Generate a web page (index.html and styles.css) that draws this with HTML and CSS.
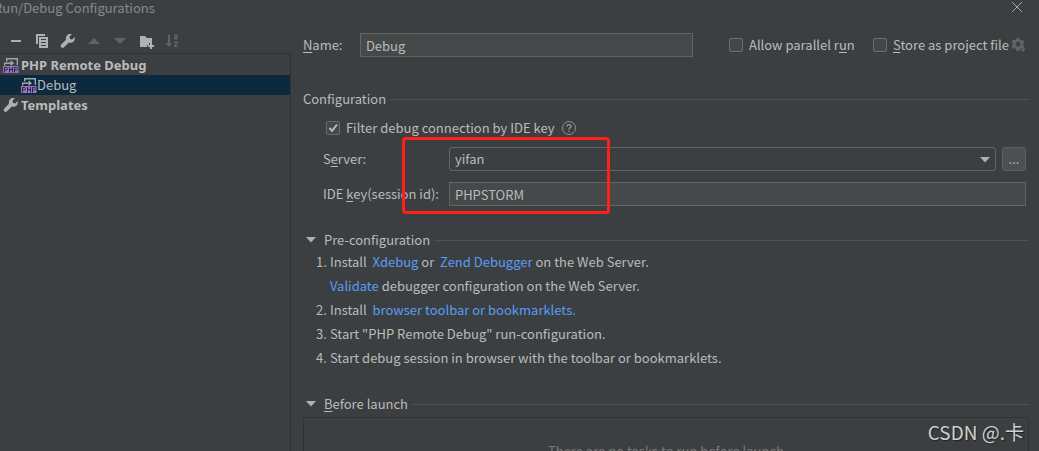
FILE: index.html
```html
<!DOCTYPE html>
<html lang="en">
<head>
<meta charset="utf-8">
<title>Run/Debug Configurations</title>
<link rel="stylesheet" href="styles.css">
</head>
<body>
<svg class="defs" aria-hidden="true">
  <defs>
    <symbol id="wrench" viewBox="0 0 16 16"><path fill="#afb1b3" d="M14.6 4.1 12.3 6.4 9.9 5.9 9.6 3.6 11.9 1.3C10.2.7 8.3 1.1 7 2.4 5.8 3.600 5.500 5.300 6 6.800L1.300 11.500a1.900 1.900 0 0 0 0 2.700 1.900 1.900 0 0 0 2.700 0L8.900 9.500c1.600.6 3.400.2 4.600-1 1.200-1.200 1.600-2.900 1.100-4.400Z"/></symbol>
    <symbol id="php" viewBox="0 0 16 16">
      <path fill="none" stroke="#9aa7b0" stroke-width="1.400" d="M3.700 4.500V1.700H14.300V8M1 6.300H9.500M7.500 3.900 10 6.300 7.500 8.200M1.700 8.500V6"/>
      <path fill="#9876c4" d="M0 9h15.500v7H0z"/>
      <path fill="none" stroke="#2f2540" d="M1.500 15.500v-5h2q1 0 1 1.200t-1 1.300h-2M6.500 10v5.500M9.500 10v5.500M6.500 12.500h3M11.500 15.500v-5h2q1 0 1 1.200t-1 1.300h-2"/>
    </symbol>
    <symbol id="down" viewBox="0 0 10 6"><path fill="#afb1b3" d="M0 0h10L5 5.500z"/></symbol>
  </defs>
</svg>
<header class="titlebar">
  <h1 class="title">Run/Debug Configurations</h1>
  <button class="plain close" aria-label="Close"><svg width="12" height="12"><path fill="none" stroke="#a4a6a8" d="m1 1 10 10M11 1 1 11"/></svg></button>
</header>
<div class="window">
  <aside class="sidebar">
    <div class="toolbar">
      <button class="plain" aria-label="Remove"><svg width="16" height="16"><path fill="#afb1b3" d="M3 7h10v2H3z"/></svg></button>
      <button class="plain" aria-label="Copy"><svg width="16" height="16"><path fill="#afb1b3" fill-rule="evenodd" d="M2 1h9v2H4v8H2zM5 4h9v11H5zM7 6v1h5V6zm0 3v1h5V9zm0 3v1h5v-1z"/></svg></button>
      <button class="plain" aria-label="Edit templates"><svg width="16" height="16"><use href="#wrench"/></svg></button>
      <button class="plain" aria-label="Move up"><svg width="16" height="16"><path fill="#606365" d="M2 11h12L8 5z"/></svg></button>
      <button class="plain" aria-label="Move down"><svg width="16" height="16"><path fill="#606365" d="M2 5h12L8 11z"/></svg></button>
      <button class="plain" aria-label="New folder"><svg width="16" height="16"><path fill="#afb1b3" d="M2 3h5l2 2h5v5h-3v2H9v2H2zM12 10h2v2h2v2h-2v2h-2v-2h-2v-2h2z"/></svg></button>
      <button class="plain" aria-label="Sort"><svg width="16" height="16"><path fill="#606365" d="M4 2h2v8h2.500L5 14 1.500 10H4z"/><path fill="none" stroke="#606365" stroke-width="1.400" d="M10 2.200h2.800V6.500M13 4.200H10.700v1.700H13M10 9.200h3.400L10.500 13.300H14"/></svg></button>
    </div>
    <ul class="tree">
      <li class="node group"><svg width="16" height="16"><use href="#php"/></svg>PHP Remote Debug</li>
      <li class="node child selected"><svg width="16" height="16"><use href="#php"/></svg>Debug</li>
      <li class="node group"><svg width="16" height="16"><use href="#wrench"/></svg>Templates</li>
    </ul>
  </aside>
  <main class="panel">
    <div class="name-row">
      <label class="name-label" for="name"><u>N</u>ame:</label>
      <input class="field name" id="name" type="text" value="Debug">
      <label class="option parallel"><input class="check" type="checkbox"><span>Allow parallel r<u>u</u>n</span></label>
      <label class="option store"><input class="check" type="checkbox"><span><u>S</u>tore as project file</span></label>
      <button class="plain gear" aria-label="Storage options"><svg width="16" height="16"><path fill="#606365" fill-rule="evenodd" d="M5.500 1h3l.4 1.800 1.300.8 1.800-.6 1.500 2.600-1.400 1.300v1.400l1.400 1.300-1.300 1.900-1.900-.4-1.400.9-.4 2h-3l-.4-2-1.300-.8-1.800.6-1.500-2.600 1.400-1.300V6.400L.5 5.100 2 2.500l1.800.6 1.300-.8zM7 4.800a2.400 2.400 0 1 0 0 4.800 2.400 2.400 0 0 0 0-4.800ZM9 11.500h6L12 15z"/></svg></button>
    </div>
    <fieldset class="group-box">
      <legend class="heading">Configuration</legend>
      <div class="filter-row">
        <label class="option"><input class="check" type="checkbox" checked>Filter debug connection by IDE key</label>
        <button class="plain" aria-label="Help"><svg width="16" height="16"><circle cx="8" cy="8" r="6.500" fill="none" stroke="#8f9193"/><path fill="none" stroke="#9b9d9f" stroke-width="1.300" d="M6 6.500C6 4 10 4 10 6.400 10 7.800 8 7.800 8 9.500M8 10.700V12"/></svg></button>
      </div>
      <div class="form">
        <label for="server">S<u>e</u>rver:</label>
        <div class="server-row">
          <div class="select-wrap">
            <select class="field select" id="server"><option>yifan</option></select>
            <svg class="arrow" width="10" height="6"><use href="#down"/></svg>
          </div>
          <button class="more" aria-label="Browse servers">...</button>
        </div>
        <label for="key">IDE <u>k</u>ey(session id):</label>
        <input class="field" id="key" type="text" value="PHPSTORM">
        <div class="highlight"></div>
      </div>
    </fieldset>
    <section class="pre">
      <h2 class="heading"><svg width="10" height="6"><use href="#down"/></svg>Pre-configuration</h2>
      <ol class="steps">
        <li>Install&nbsp; <a href="#">Xdebug</a> or&nbsp; <a href="#">Zend Debugger</a> on the Web Server.<br><a href="#">Validate</a> debugger configuration on the Web Server.</li>
        <li>Install&nbsp; <a href="#">browser toolbar or bookmarklets.</a></li>
        <li>Start "PHP Remote Debug" run-configuration.</li>
        <li>Start debug session in browser with the toolbar or bookmarklets.</li>
      </ol>
    </section>
    <section class="before">
      <h2 class="heading"><svg width="10" height="6"><use href="#down"/></svg><span><u>B</u>efore launch</span></h2>
      <div class="tasks">There are no tasks to run before launch</div>
    </section>
  </main>
</div>
<div class="watermark">CSDN @.卡</div>
</body>
</html>
```
FILE: styles.css
```css
* { box-sizing: border-box; }
body {
  margin: 0;
  height: 100vh;
  overflow: hidden;
  display: flex;
  flex-direction: column;
  background: #3c3f41;
  color: #bbbbbb;
  font: 13px/20px "Noto Sans CJK SC", "Noto Sans", sans-serif;
}
button, input, select { font: inherit; color: inherit; }
svg { flex: none; display: block; }
u { text-underline-offset: 2px; }
.defs { position: absolute; width: 0; height: 0; }
.plain { display: block; padding: 0; border: 0; background: none; }

.titlebar {
  flex: none;
  height: 28px;
  display: flex;
  justify-content: space-between;
  align-items: flex-start;
  padding: 0 16px 0 0;
}
.title { margin: -2px 0 0 -6px; font-size: 13px; font-weight: 400; color: #87898a; }
.close { margin-top: 1px; }

.window { flex: 1; min-height: 0; display: flex; }
.sidebar { flex: 0 0 28%; display: flex; flex-direction: column; }
.toolbar { display: flex; align-items: flex-start; gap: 10px; height: 26px; padding: 5px 8px 0; border-bottom: 1px solid #323232; }
.tree { flex: 1; margin: 0; padding: 1px 0 0; list-style: none; border-right: 1px solid #323232; }
.node { display: flex; align-items: center; gap: 2px; height: 20px; padding-left: 3px; }
.group { font-family: "Noto Sans", sans-serif; line-height: 18px; font-weight: 700; }
.child { padding-left: 21px; gap: 0; }
.selected { background: #0d293e; }

.panel { flex: 1; min-width: 0; padding: 5px 10px 0 12px; display: flex; flex-direction: column; }
.name-row { display: flex; align-items: center; height: 24px; }
.name-label { width: 57px; }
.field {
  width: 100%;
  height: 24px;
  padding: 0 5px;
  border: 1px solid #646464;
  border-radius: 0;
  background: #45494a;
  outline: 0;
}
.name { flex: 1; width: auto; min-width: 0; }
.option { display: flex; align-items: center; gap: 6px; white-space: nowrap; }
.parallel { width: 144px; margin-left: 36px; }
.store { width: 138px; }
.gear { margin-right: 2px; }
.check {
  appearance: none;
  flex: none;
  width: 14px;
  height: 14px;
  margin: 0;
  border: 1px solid #6b6b6b;
  border-radius: 2px;
  background: #43494a;
}
.check:checked {
  background: #43494a url("data:image/svg+xml,%3Csvg xmlns='http://www.w3.org/2000/svg' viewBox='0 0 12 12'%3E%3Cpath d='M2.500 6 5 9 10 2.500' fill='none' stroke='%23bbb' stroke-width='2'/%3E%3C/svg%3E");
}

.heading { display: flex; align-items: center; gap: 8px; height: 20px; margin: 0; padding: 0; font-size: 13px; font-weight: 400; }
.heading::after { content: ""; flex: 1; height: 1px; margin-left: -4px; background: #515151; }
.heading svg { margin-left: 3px; }
.group-box { min-width: 0; margin: 32px 0 0; padding: 9px 3px 0 20px; border: 0; }
.group-box .heading { width: calc(100% + 23px); margin: 0 -3px 0 -20px; }
.filter-row { display: flex; align-items: center; gap: 6px; height: 20px; padding-left: 3px; }
.form {
  position: relative;
  display: grid;
  grid-template-columns: 126px 1fr;
  align-items: center;
  row-gap: 11px;
  margin-top: 9px;
}
.server-row { display: flex; gap: 6px; min-width: 0; }
.select-wrap { position: relative; flex: 1; }
.select { display: block; appearance: none; background: #3c3f41; border-radius: 3px; }
.arrow { position: absolute; right: 6px; top: 10px; }
.more { width: 24px; height: 24px; padding: 0; border: 1px solid #5e6060; border-radius: 3px; background: #4c5052; }
.highlight { position: absolute; left: 79px; top: -10px; width: 208px; height: 77px; border: 3px solid #ff2018; border-radius: 4px; }

.pre { margin-top: 24px; }
.steps { margin: 0; padding-left: 27px; line-height: 24px; }
.steps li { list-style: none; counter-increment: step; }
.steps li::before { content: counter(step) "."; display: inline-block; width: 14px; margin-left: -14px; }
a { color: #589df6; text-decoration: none; }
.before { flex: 1; min-height: 0; display: flex; flex-direction: column; margin-top: 24px; }
.tasks { flex: none; height: 90px; margin-top: 3px; padding-top: 23px; border: 1px solid #323232; text-align: center; color: #787878; }
.watermark {
  position: absolute;
  right: 15px;
  bottom: 6px;
  font: 19px/26px "Noto Sans CJK SC", sans-serif;
  color: #d0d0d0;
  text-shadow: 1px 1px 1px #222;
}
```
